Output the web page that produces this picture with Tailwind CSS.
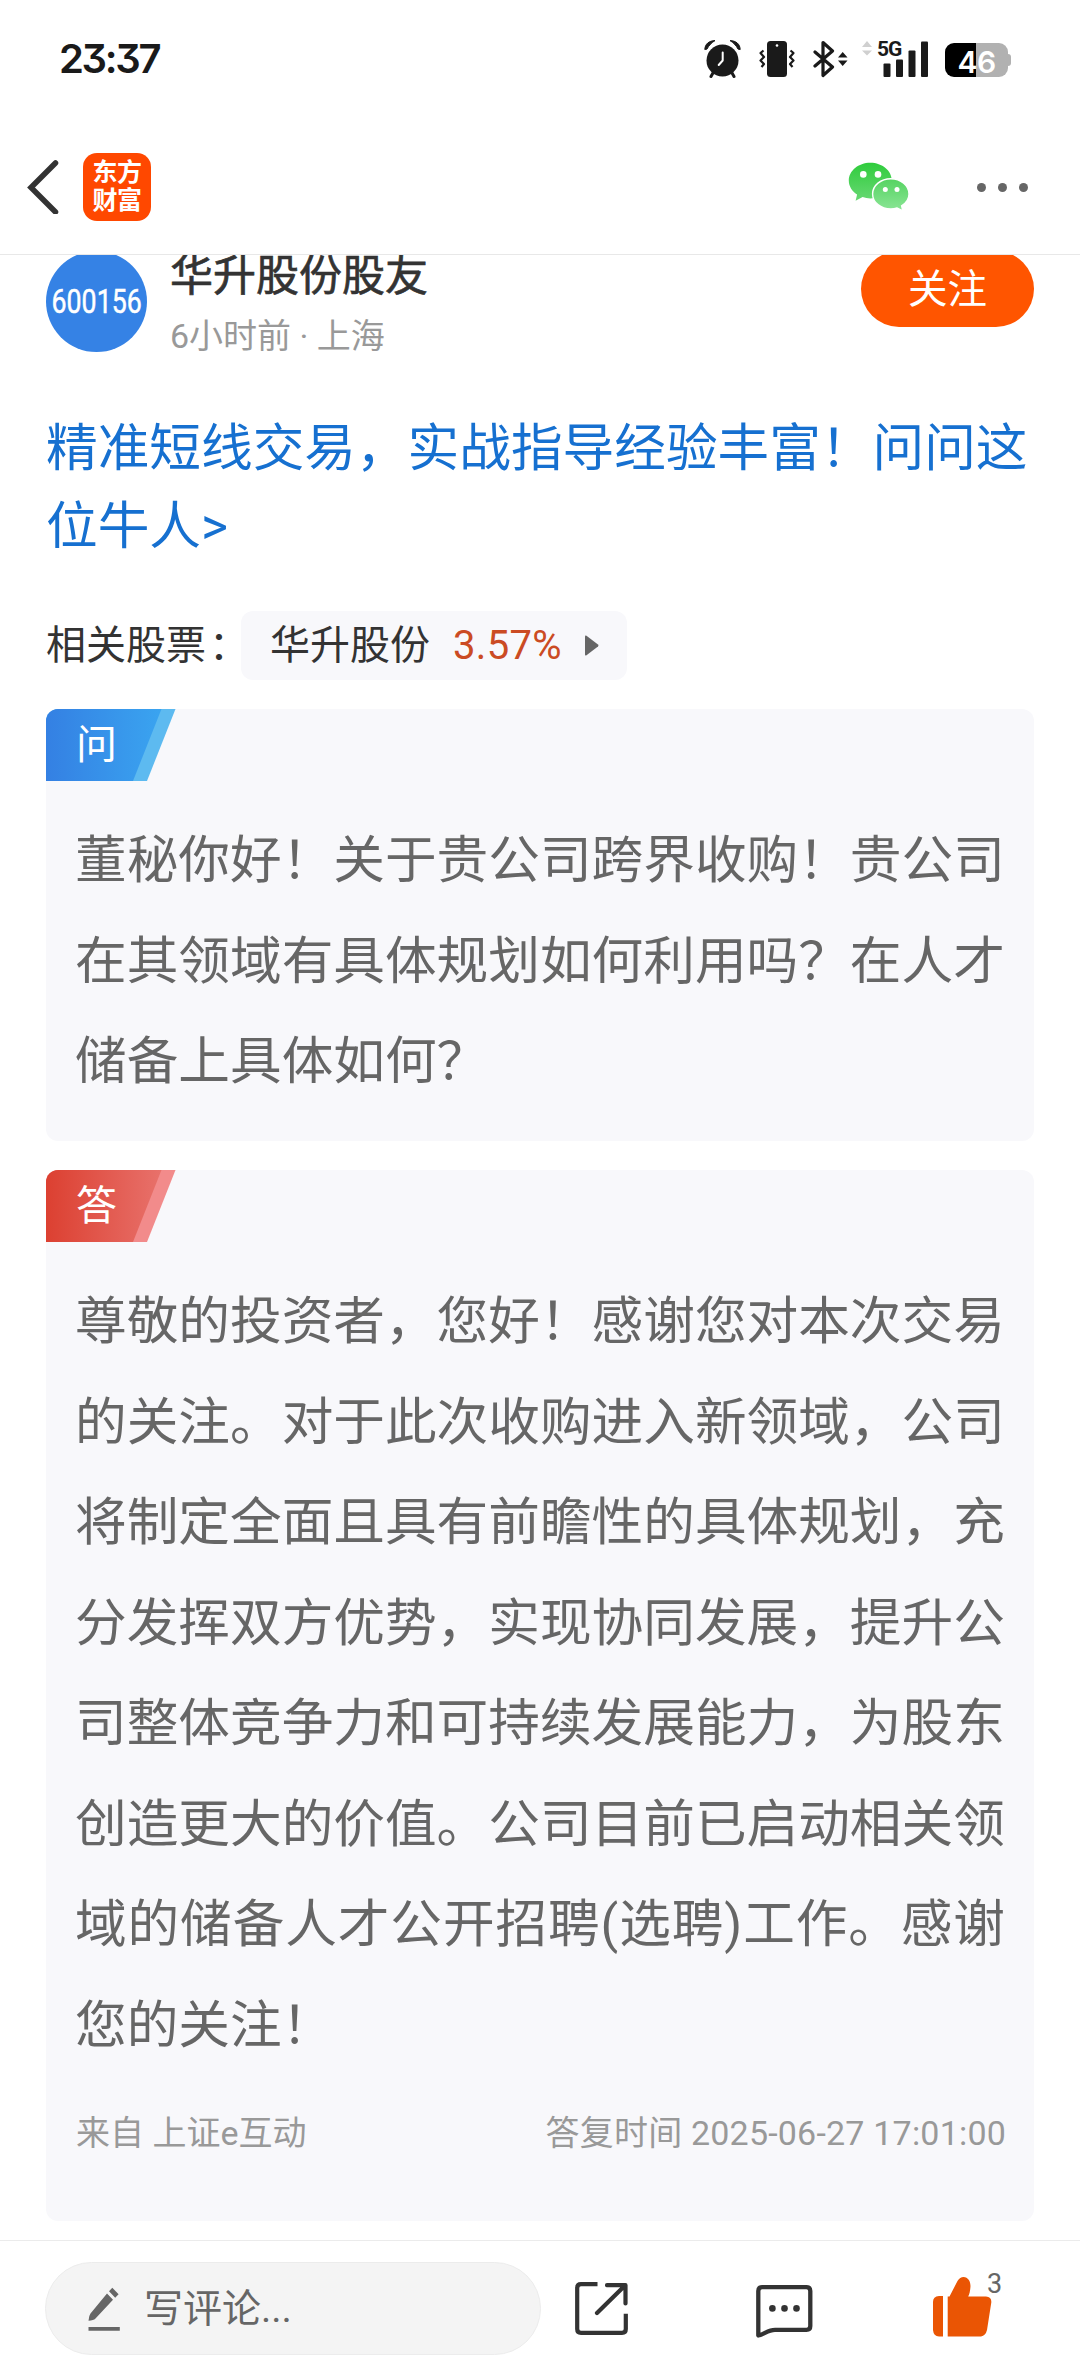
<!DOCTYPE html>
<html lang="zh-CN">
<head>
  <meta charset="UTF-8" />
  <meta name="viewport" content="width=device-width, initial-scale=1" />
  <title>东方财富 - 华升股份股友</title>
  <script src="https://cdn.jsdelivr.net/npm/@tailwindcss/browser@4"></script>
</head>
<body class="bg-white font-['Roboto','Noto_Sans_CJK_SC',sans-serif] text-[#333]">
  <div class="flex h-[2376px] w-[1080px] flex-col overflow-hidden">
    <!-- Status bar -->
    <div class="flex h-[118px] shrink-0 items-center pl-[59px] pr-[69px]">
      <div class="mr-auto font-['Inter'] text-[40px] leading-none font-semibold tracking-[-2.300px] text-[#1a1a1a] [font-feature-settings:'cv09']">23:37</div>
      <svg class="mr-[18px] h-[38px] w-[37px]" viewBox="0 0 37 38" fill="none">
        <circle cx="18.5" cy="20.5" r="16" fill="#1a1a1a" />
        <path d="M.8 9.5C1 4 5 .7 11 .6c-3 1.800-6 4.500-8 8.500zM36.200 9.500C36 4 32 .7 26 .6c3 1.800 6 4.500 8 8.500z" fill="#1a1a1a" stroke="#1a1a1a" stroke-linejoin="round" />
        <path d="M9.500 32l-2.500 4.500M27.500 32l2.500 4.500" stroke="#1a1a1a" stroke-width="3" stroke-linecap="round" />
        <path d="M18.700 12.500v8l-4 4.500" stroke="#fff" stroke-width="2" stroke-linecap="round" stroke-linejoin="round" />
      </svg>
      <svg class="mr-[18px] h-[38px] w-[36px]" viewBox="0 0 36 38" fill="none">
        <rect x="8" y="1" width="20" height="36" rx="3.500" fill="#1a1a1a" />
        <circle cx="18" cy="5.500" r="1.300" fill="#fff" />
        <path d="M4.500 10.500L1.500 13l3.500 4-3.500 3.500 3.500 3.500-2.500 3M31.500 10.500l3 2.500-3.500 4 3.500 3.500-3.500 3.500 2.500 3" stroke="#1a1a1a" stroke-width="2.200" stroke-linejoin="round" />
      </svg>
      <svg class="mr-[13px] h-[38px] w-[36px]" viewBox="0 0 36 38" fill="none">
        <path d="M2 12l17.500 15-9.500 8.500V2.500L19.500 11 2 26" stroke="#1a1a1a" stroke-width="3.200" stroke-linejoin="round" stroke-linecap="round" />
        <path d="M25 17.500l4.700-5.500 4.800 5.500zM25 20.500h9.500L29.700 26z" fill="#1a1a1a" />
      </svg>
      <div class="relative mr-[16px] h-[38px] w-[67px]">
        <svg class="h-[38px] w-[67px]" viewBox="0 0 67 38">
          <path d="M0 7l5-6 5 6zM0 10.500h10l-5 5z" fill="#d0d0d0" />
          <rect x="21.500" y="23.500" width="7" height="13.500" rx="1" fill="#1a1a1a" />
          <rect x="34" y="19.500" width="7" height="17.500" rx="1" fill="#1a1a1a" />
          <rect x="46.500" y="10.500" width="7" height="26.500" rx="1" fill="#1a1a1a" />
          <rect x="59" y="1.500" width="7" height="35.500" rx="1" fill="#1a1a1a" />
        </svg>
        <span class="absolute -top-px left-[15px] text-[21px] leading-5 font-bold tracking-[-1px] text-[#1a1a1a]">5G</span>
      </div>
      <div class="flex items-center pt-0.5">
        <div class="flex h-[34px] w-[63px] items-center justify-center rounded-[9px] bg-linear-to-r from-black from-49% to-[#b1b1b1] to-49% pt-[3px] font-['Inter'] text-[30px] leading-none font-semibold tracking-[-0.500px] text-white">46</div>
        <div class="h-3 w-[3px] rounded-r-sm bg-[#b1b1b1]"></div>
      </div>
    </div>

    <!-- Navigation bar -->
    <header class="flex h-[137px] shrink-0 items-center border-b border-[#e8e8e8] pt-[2px] pr-[52px] pl-[27px]">
      <svg class="h-[54px] w-[32px]" viewBox="0 0 32 54" fill="none">
        <path d="M28.500 3L4 27.500 28.500 52" stroke="#333" stroke-width="5.500" stroke-linecap="round" />
      </svg>
      <div class="ml-6 flex size-[68px] flex-col items-center justify-center rounded-[14px] bg-[#ff4800] text-[25px] leading-[28.500px] font-bold tracking-[-0.500px] text-white">
        <span>东方</span>
        <span>财富</span>
      </div>
      <svg class="mr-[67px] ml-auto h-[50px] w-[62px]" viewBox="0 0 62 50">
        <defs>
          <linearGradient id="bubble-back" x1="0" y1="0" x2="0" y2="1">
            <stop offset="0" stop-color="#2fcc3c" />
            <stop offset="1" stop-color="#68d873" />
          </linearGradient>
          <linearGradient id="bubble-front" x1="0" y1="0" x2="0" y2="1">
            <stop offset="0" stop-color="#55d361" />
            <stop offset="1" stop-color="#8be596" />
          </linearGradient>
        </defs>
        <path d="M22.300.7C10.400.7.8 8.700.8 18.600c0 5.800 3.200 10.700 8.300 14L7.600 38.700l7-3.600c2.500.8 5 1.300 7.700 1.300 11.900 0 21.500-8 21.500-17.900S34.200.7 22.300.7z" fill="url(#bubble-back)" />
        <path d="M42.800 16.700c-10 0-18.200 6.800-18.200 15.200S32.800 47 42.800 47c2.200 0 4.300-.3 6.300-1l5.700 2.800-1.200-5c4.500-2.800 7.400-7 7.400-11.900 0-8.400-8.200-15.200-18.200-15.200z" fill="url(#bubble-front)" stroke="#fff" stroke-width="1.400" />
        <circle cx="15.300" cy="12.400" r="3.300" fill="#fff" />
        <circle cx="30" cy="12.400" r="3.300" fill="#fff" />
        <circle cx="37.300" cy="27.400" r="2.500" fill="#fff" />
        <circle cx="49" cy="27.400" r="2.500" fill="#fff" />
      </svg>
      <div class="flex gap-3">
        <span class="size-[9px] rounded-full bg-[#666]"></span>
        <span class="size-[9px] rounded-full bg-[#666]"></span>
        <span class="size-[9px] rounded-full bg-[#666]"></span>
      </div>
    </header>

    <main class="grow overflow-hidden px-[46px]">
      <!-- Author, scrolled slightly under the navigation bar -->
      <div class="-mt-1 flex h-[101px] items-start">
        <div class="flex size-[101px] shrink-0 items-center justify-center rounded-full bg-[#3582e5]">
          <span class="scale-x-[0.810] text-[33px] leading-none text-white [-webkit-text-stroke:0.500px_white]">600156</span>
        </div>
        <div class="ml-[23px]">
          <div class="text-[43px] leading-[50px] [-webkit-text-stroke:0.700px_#333]">华升股份股友</div>
          <div class="mt-[12px] text-[34px] leading-[46px] text-[#999]">6小时前 · 上海</div>
        </div>
        <button class="ml-auto h-[76px] w-[173px] rounded-full bg-[#f50] pt-[2px] text-[39.500px] leading-[74px] text-white">关注</button>
      </div>

      <a class="mt-[58px] block text-[51.660px] leading-[78px] whitespace-nowrap text-[#1670d0]">精准短线交易，实战指导经验丰富！问问这<br />位牛人&gt;</a>

      <div class="mt-[45px] flex h-[69px] items-center text-[40px]">
        <span class="w-[195px] whitespace-nowrap">相关股票<span class="ml-[3px]">：</span></span>
        <div class="flex h-[69px] w-[386px] items-center rounded-xl bg-[#f8f8fb] pl-[29px]">
          <span>华升股份</span>
          <span class="ml-[23px] tracking-[0.300px] text-[#cb4b23]">3.57%</span>
          <svg class="ml-[23px] h-[21px] w-[14px]" viewBox="0 0 14 21">
            <path d="M0 1.500Q0 0 1.500.8L13 9.500q1 1 0 2L1.500 20.200Q0 21 0 19.500z" fill="#666" />
          </svg>
        </div>
      </div>

      <!-- Question -->
      <section class="mt-[29px] h-[432px] overflow-hidden rounded-xl bg-[#f8f8fb]">
        <div class="relative h-[72px] w-[130px]">
          <svg class="h-[72px] w-[130px]" viewBox="0 0 130 72">
            <defs>
              <linearGradient id="tag-ask" x1="0" y1="0" x2="1" y2="0">
                <stop offset="0" stop-color="#3480e3" />
                <stop offset="1" stop-color="#3aa4f0" />
              </linearGradient>
            </defs>
            <path d="M0 0H129.500L101 72H0z" fill="#5dbaf0" />
            <path d="M0 0H115.500L87 72H0z" fill="url(#tag-ask)" />
          </svg>
          <span class="absolute top-px left-[30px] text-[41px] leading-[70px] text-white">问</span>
        </div>
        <p class="mt-[30px] pl-[29px] text-[51.660px] leading-[100.500px] whitespace-nowrap text-[#666]">
          董秘你好！关于贵公司跨界收购！贵公司<br />
          在其领域有具体规划如何利用吗？在人才<br />
          储备上具体如何？
        </p>
      </section>

      <!-- Answer -->
      <section class="mt-[29px] h-[1051px] overflow-hidden rounded-xl bg-[#f8f8fb]">
        <div class="relative h-[72px] w-[130px]">
          <svg class="h-[72px] w-[130px]" viewBox="0 0 130 72">
            <defs>
              <linearGradient id="tag-reply" x1="0" y1="0" x2="1" y2="0">
                <stop offset="0" stop-color="#dc4031" />
                <stop offset="1" stop-color="#e8716b" />
              </linearGradient>
            </defs>
            <path d="M0 0H129.500L101 72H0z" fill="#f28b8b" />
            <path d="M0 0H115.500L87 72H0z" fill="url(#tag-reply)" />
          </svg>
          <span class="absolute top-px left-[30px] text-[41px] leading-[70px] text-white">答</span>
        </div>
        <p class="mt-[30px] pl-[29px] text-[51.660px] leading-[100.500px] whitespace-nowrap text-[#666]">
          尊敬的投资者，您好！感谢您对本次交易<br />
          的关注。对于此次收购进入新领域，公司<br />
          将制定全面且具有前瞻性的具体规划，充<br />
          分发挥双方优势，实现协同发展，提升公<br />
          司整体竞争力和可持续发展能力，为股东<br />
          创造更大的价值。公司目前已启动相关领<br />
          <span class="tracking-[0.900px]">域的储备人才公开招聘(选聘)工作。感谢</span><br />
          您的关注！
        </p>
        <div class="mt-[32px] flex justify-between pr-[28px] pl-[30px] text-[34px] leading-[50px] text-[#999]">
          <span>来自 上证e互动</span>
          <span class="tracking-[0.200px]">答复时间 2025-06-27 17:01:00</span>
        </div>
      </section>
    </main>

    <!-- Bottom bar -->
    <footer class="flex h-[136px] shrink-0 items-start border-t border-[#ebebeb] pt-[21px] pl-[45px]">
      <div class="flex h-[93px] w-[496px] items-center rounded-full border border-[#ececec] bg-[#f4f4f4] pl-[42px]">
        <svg class="h-[44px] w-[32px]" viewBox="0 0 32 44">
          <path d="M19 6.500l6 6.300L7.500 31.500Q5.500 33.500.5 33.700q.3-5 2-7.200zM24.300.7l6.300 6.500-3.400 3.500-6.200-6.400zM.5 40h31.300v3.700H.5z" fill="#666" />
        </svg>
        <span class="ml-[24px] pt-[2px] text-[39px] leading-none text-[#666]">写评论...</span>
      </div>
      <svg class="mt-[20px] ml-[34px] h-[53px] w-[53px]" viewBox="0 0 53 53" fill="none" stroke="#333" stroke-width="4.200">
        <path d="M22.500 2.200H6q-3.800 0-3.800 3.800V47q0 3.800 3.800 3.800H47q3.800 0 3.800-3.800V31.700" />
        <path d="M32 3.200H50.500V21.500M22 31L50 3.500" stroke-linecap="round" stroke-linejoin="round" />
      </svg>
      <svg class="mt-[23px] ml-[128px] h-[54px] w-[57px]" viewBox="0 0 57 54">
        <path d="M2.300 50.500V6q0-3.800 3.800-3.800H50.500q3.800 0 3.800 3.800V41q0 3.800-3.800 3.800H19C12 44.800 8 49.500 2.300 50.500z" fill="none" stroke="#333" stroke-width="4.300" stroke-linejoin="round" />
        <circle cx="16.400" cy="23.400" r="3.300" fill="#333" />
        <circle cx="28.500" cy="23.400" r="3.300" fill="#333" />
        <circle cx="40.500" cy="23.400" r="3.300" fill="#333" />
      </svg>
      <div class="relative mt-[15px] ml-[120px]">
        <svg class="h-[60px] w-[59px]" viewBox="0 0 59 60" fill="#ea5504">
          <path d="M10 19H6Q0 19.500 0 25V53q.5 6 6 6.600H10z" />
          <path d="M14.700 59.400V19.500H16.500L24.500 4Q27 0 30.500 0C35.500.2 38 5 37.400 10.500 37.100 14 36.500 17 35.200 19.500H53q5.800.5 5.300 6L54 53q-1.500 6-6 6.400z" />
        </svg>
        <span class="absolute -top-[6px] left-[54px] text-[27px] leading-[27px] text-[#666]">3</span>
      </div>
    </footer>
  </div>
</body>
</html>
